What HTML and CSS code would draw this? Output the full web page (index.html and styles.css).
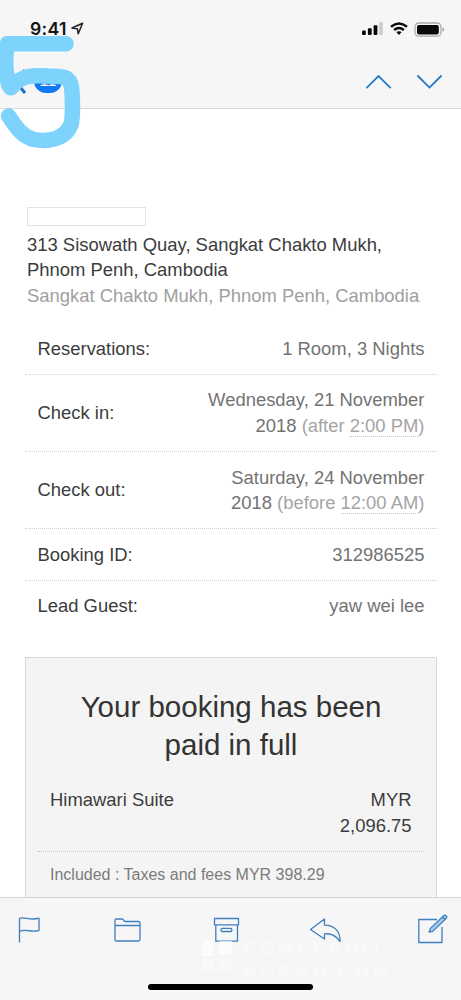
FILE: index.html
```html
<!DOCTYPE html>
<html lang="en">
<head>
<meta charset="utf-8">
<title>Booking confirmation</title>
<link rel="stylesheet" href="styles.css">
</head>
<body>
<div class="phone">
  <header class="top">
    <div class="status">
      <div class="clock">
        <span class="time">9:41</span>
        <svg class="location" width="13" height="13" viewBox="0 0 13 13"><path d="M1 6 11.6 1.2 7.2 11.8 6.3 6.7Z"/></svg>
      </div>
      <div class="indicators">
        <svg width="22" height="14" viewBox="0 0 22 14"><rect x="0" y="8.5" width="3.8" height="4.5" rx="1"/><rect x="5.9" y="6.2" width="3.8" height="6.8" rx="1"/><rect x="11.6" y="3.2" width="3.8" height="9.8" rx="1"/><rect class="faint" x="17.2" y="0" width="3.6" height="13" rx="1"/></svg>
        <svg width="18" height="14" viewBox="0 0 18 14"><g class="wifi"><path d="M1 4.7Q9-1.9 17 4.7"/><path d="M4.1 8Q9 3.9 13.9 8"/></g><path d="M6.4 10.1Q9 8.2 11.6 10.1L9 13Z"/></svg>
        <svg width="31" height="16" viewBox="0 0 31 16"><rect class="battery" x="1" y="1" width="26" height="13.2" rx="3.8"/><rect x="3" y="3" width="21.8" height="9.4" rx="1.8"/><path class="tip" d="M28.5 5.3Q30.3 6 30.3 7.6T28.5 10Z"/></svg>
      </div>
    </div>
    <nav class="mailnav">
      <div class="back">
        <svg width="12" height="26" viewBox="0 0 12 26"><path d="m10 1-9 12 9 11"/></svg>
        <span class="count">11</span>
      </div>
      <div class="arrows">
        <svg width="27" height="16" viewBox="0 0 27 16"><path d="m1.4 14.1 12.1-12 12.2 12"/></svg>
        <svg width="27" height="16" viewBox="0 0 27 16"><path d="m1.4 1.5 12.1 12.1L25.6 1.5"/></svg>
      </div>
    </nav>
    <svg class="scribble" width="90" height="155" viewBox="0 0 90 155"><path d="M66 43.8H7.5Q4.5 58 6.5 73.5T11.5 87.5C20 75 34 75 48 76C66 76 70 78 71.5 87C73 102 73 112 71.5 123C66 140 47 142 34 139.5C20 136 14 123 8.5 116"/></svg>
  </header>

  <main class="message">
    <div class="redacted"></div>
    <p class="address">313 Sisowath Quay, Sangkat Chakto Mukh,<br>Phnom Penh, Cambodia</p>
    <p class="area">Sangkat Chakto Mukh, Phnom Penh, Cambodia</p>
    <dl class="details">
      <div class="row"><dt>Reservations:</dt><dd>1 Room, 3 Nights</dd></div>
      <div class="row"><dt>Check in:</dt><dd>Wednesday, 21 November<br>2018 <span class="note">(after <span class="link">2:00 PM</span>)</span></dd></div>
      <div class="row"><dt>Check out:</dt><dd>Saturday, 24 November<br>2018 <span class="note">(before <span class="link">12:00 AM</span>)</span></dd></div>
      <div class="row"><dt>Booking ID:</dt><dd>312986525</dd></div>
      <div class="row"><dt>Lead Guest:</dt><dd>yaw wei lee</dd></div>
    </dl>
    <section class="payment">
      <h1>Your booking has been<br>paid in full</h1>
      <div class="room"><span>Himawari Suite</span><span class="price">MYR<br>2,096.75</span></div>
      <p class="included">Included : Taxes and fees MYR 398.29</p>
    </section>
  </main>

  <footer class="bottom">
    <div class="tools">
      <svg width="24" height="28" viewBox="0 0 24 28"><path d="M1.5 25.5V1.5C6-.8 12 4 21 1.2V13.3C14 16 8 11.5 1.5 14.3"/></svg>
      <svg width="28" height="28" viewBox="0 0 28 28"><path d="M1 23V3.5Q1 2 2.5 2H8Q9.2 2 9.6 3.2T11.2 4.5H24.5Q26 4.5 26 6V22.5Q26 24 24.5 24H2.5Q1 24 1 22.5M1 8.5H26"/></svg>
      <svg width="28" height="28" viewBox="0 0 28 28"><path d="M1.5 1.5H25.5V7.8H1.5ZM2.8 7.8V24.2H24.5V7.8"/><rect x="8" y="11.3" width="10.8" height="3.2" rx="1.1"/></svg>
      <svg class="reply" width="33" height="28" viewBox="0 0 33 28"><path d="M1.5 12.5 15.5 2V8.2C25 8.2 31.5 14 31 24.5C26 17.2 21 16.5 15.5 16.8V22Z"/></svg>
      <svg width="31" height="31" viewBox="0 0 31 31"><path d="M20 5.5H1.8V28.5H25V13"/><path class="pencil" d="m12.2 18.2 1-3.6L26.8 1.5Q28 .7 29.2 2T29.3 4.2L15.7 17.4ZM25.5 3l2.6 2.6"/></svg>
    </div>
    <div class="homebar"></div>
    <div class="watermark">
      <svg width="34" height="36" viewBox="0 0 34 36"><path d="M2 2H13V17H2ZM19 2H32V16H19Z"/><path d="M2 20H14V32H2ZM19 20H31V32H19Z" class="pane"/></svg>
      <div class="brand"><span>COMPLAINTS</span><span>BOARD.COM</span></div>
    </div>
  </footer>
</div>
</body>
</html>
```
FILE: styles.css
```css
* { box-sizing: border-box; }
body, p, h1, dl, dd { margin: 0; }
body { background: #fff; font-family: "Liberation Sans", Arial, sans-serif; }
svg { display: block; flex: none; }

.phone {
  width: 461px;
  height: 1000px;
  display: grid;
  grid-template-rows: 109px 788px 103px;
  overflow: hidden;
  color: #3c3c3c;
  font-size: 18.43px;
  line-height: 25.8px;
}

.top {
  position: relative;
  background: #f6f6f6;
  border-bottom: 1px solid #d9d9d9;
}
.status {
  display: flex;
  justify-content: space-between;
  height: 56px;
  padding: 20px 16px 0 30px;
}
.clock { display: flex; gap: 4px; }
.time {
  font: 600 17.6px/17px Inter, sans-serif;
  letter-spacing: 0.3px;
  color: #151515;
}
.location { fill: none; stroke: #222; stroke-width: 1.5; stroke-linejoin: round; margin-top: 2px; }
.indicators { display: flex; gap: 6px; fill: #080808; padding-top: 2px; }
.faint { fill: #ccc; }
.wifi { fill: none; stroke: #080808; stroke-width: 2.4; }
.battery { fill: none; stroke: #aaa; stroke-width: 1.3; }
.tip { fill: #aaa; }

.mailnav {
  display: flex;
  justify-content: space-between;
  padding: 13px 18px 0 15px;
}
.back { display: flex; gap: 7px; }
.back svg { fill: none; stroke: #1674cf; stroke-width: 3; }
.count {
  width: 28px;
  height: 24px;
  border-radius: 12px;
  background: #1278f2;
  color: #f4f7fb;
  font-size: 17px;
  line-height: 24px;
  text-align: center;
}
.arrows { display: flex; gap: 24px; padding-top: 5px; }
.arrows svg { fill: none; stroke: #2579c4; stroke-width: 1.8; }
.scribble {
  position: absolute;
  left: 0;
  top: 0;
  fill: none;
  stroke: #7dd3fc;
  stroke-width: 15.5;
  stroke-linecap: round;
  stroke-linejoin: round;
}

.message { padding: 98px 24px 0 25px; overflow: hidden; }
.redacted {
  width: 119px;
  height: 19px;
  margin: 0 0 5.5px 2px;
  border: 1px solid #e4e4e4;
}
.address, .area { padding-left: 2px; white-space: nowrap; }
.area { color: #a0a0a0; }

.details { padding-top: 14.5px; }
.row {
  display: flex;
  justify-content: space-between;
  align-items: center;
  padding: 12.4px 12.5px 12.3px;
  border-bottom: 1px dotted #cfcfcf;
}
.row:last-child { border-bottom: 0; }
.row dd { color: #737373; text-align: right; }
.row .note { color: #a4a4a4; }
.link { border-bottom: 1px dotted #c4c4c4; display: inline-block; line-height: 20px; }

.payment {
  height: 280px;
  margin-top: 26px;
  padding: 30px 12px 0;
  background: #f4f4f4;
  border: 1px solid #d8d8d8;
}
.payment h1 {
  font-size: 29.5px;
  line-height: 37.2px;
  font-weight: 400;
  text-align: center;
  color: #333;
}
.room {
  display: flex;
  justify-content: space-between;
  margin-top: 24.5px;
  padding: 0 12.5px 12px 12px;
  border-bottom: 1px dotted #c4c4c4;
}
.price { text-align: right; }
.included { padding: 11.5px 12px; font-size: 16px; line-height: 24px; color: #7b7b7b; }

.bottom { position: relative; background: #f6f6f6; border-top: 1px solid #d4d4d4; }
.tools {
  display: flex;
  justify-content: space-between;
  align-items: flex-start;
  height: 86px;
  padding: 19px 13px 0 18px;
}
.tools svg { fill: none; stroke: #3f7fc0; stroke-width: 1.3; stroke-linejoin: round; }
.tools svg:last-child { margin-top: -3px; }
.tools .reply { margin: 0 4px 0 -4px; }
.tools .pencil { fill: #a9cbea; }
.homebar { width: 165px; height: 6px; margin: 0 auto; border-radius: 3px; background: #000; }
.watermark {
  position: absolute;
  left: 200px;
  top: 41px;
  display: flex;
  gap: 9px;
  color: rgba(255, 255, 255, .38);
  font-size: 20px;
  font-weight: 700;
  line-height: 20px;
  letter-spacing: 3.3px;
}
.brand { display: grid; grid-template-rows: 17px 17px; row-gap: 6px; line-height: 17px; font-size: 19px; }
.watermark svg { fill: rgba(255, 255, 255, .7); }
.watermark .pane { fill: rgba(255, 255, 255, .4); }
```
